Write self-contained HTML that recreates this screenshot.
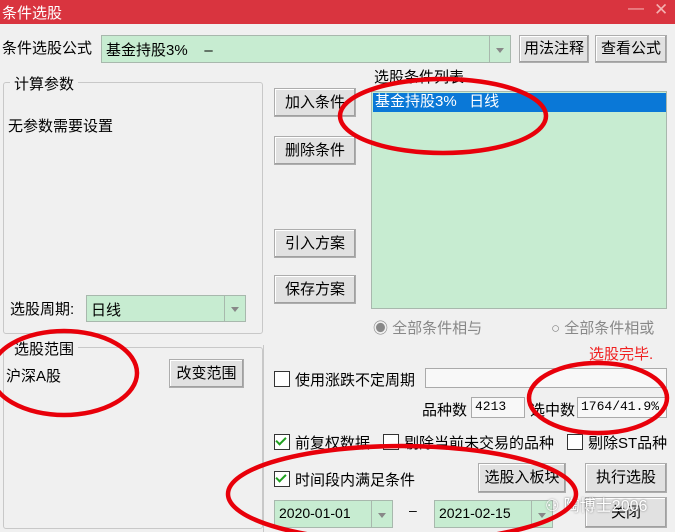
<html style="width:675px;height:532px;overflow:hidden"><head><style>
body{margin:0;width:675px;height:532px;background:#f0f0f0;font-family:"Liberation Sans","Noto Sans CJK SC",sans-serif;font-size:14px;color:#000;position:relative;overflow:hidden}
.a{position:absolute;white-space:nowrap}
.btn{position:absolute;border:1px solid #adadad;background:#e1e1e1;box-shadow:inset -1px -1px 0 #a0a0a0,inset 1px 1px 0 #fff;text-align:center;font-size:15px}
.g{position:absolute;background:#c7ecd1;border:1px solid #a8b8ad}
.dd{position:absolute;right:0;top:0;bottom:0;width:20px;background:#c7ecd1;border-left:1px solid #a8b8ad}
.dd:after{content:"";position:absolute;left:6px;top:45%;border:4px solid transparent;border-top:5px solid #888}
.grp{position:absolute;border:1px solid #c8c8c8;border-radius:3px}
.cb{position:absolute;width:14px;height:14px;border:1px solid #333;background:#fff}
.cb.k:after{content:"";position:absolute;left:3px;top:0px;width:4px;height:8px;border:solid #20a020;border-width:0 2px 2px 0;transform:rotate(45deg)}
.in{position:absolute;background:#f8f8f8;border:1px solid #aaa;font-family:"Liberation Mono",monospace;font-size:13px;line-height:18px;padding-left:3px}
</style></head><body>
<div class="a" style="left:0;top:0;width:675px;height:24px;background:#d9343f"></div>
<div class="a" style="left:2px;top:2px;color:#fff;font-size:15px">条件选股</div>
<div class="a" style="left:628px;top:0px;color:#f4b0b0;font-size:16px">—</div>
<div class="a" style="left:654px;top:0px;color:#f4b0b0;font-size:17px">✕</div>

<div class="a" style="left:2px;top:37px;font-size:15px">条件选股公式</div>
<div class="g" style="left:101px;top:35px;width:408px;height:26px"><span class="a" style="left:4px;top:3px;font-size:15px">基金持股3%&nbsp;&nbsp;&nbsp;&nbsp;–</span><div class="dd"></div></div>
<div class="btn" style="left:519px;top:35px;width:68px;height:26px;line-height:26px">用法注释</div>
<div class="btn" style="left:595px;top:35px;width:70px;height:26px;line-height:26px">查看公式</div>

<div class="grp" style="left:3px;top:82px;width:258px;height:250px"></div>
<div class="a" style="left:10px;top:73px;background:#f0f0f0;padding:0 4px;font-size:15px">计算参数</div>
<div class="a" style="left:8px;top:115px;font-size:15px">无参数需要设置</div>
<div class="a" style="left:10px;top:298px;font-size:15px">选股周期:</div>
<div class="g" style="left:86px;top:295px;width:158px;height:25px"><span class="a" style="left:4px;top:3px;font-size:15px">日线</span><div class="dd"></div></div>

<div class="grp" style="left:3px;top:347px;width:258px;height:180px"></div>
<div class="a" style="left:10px;top:338px;background:#f0f0f0;padding:0 4px;font-size:15px">选股范围</div>
<div class="a" style="left:6px;top:365px;font-size:15px">沪深A股</div>
<div class="btn" style="left:169px;top:359px;width:73px;height:27px;line-height:27px">改变范围</div>

<div class="btn" style="left:274px;top:88px;width:80px;height:27px;line-height:27px">加入条件</div>
<div class="btn" style="left:274px;top:136px;width:80px;height:27px;line-height:27px">删除条件</div>
<div class="btn" style="left:274px;top:229px;width:80px;height:27px;line-height:27px">引入方案</div>
<div class="btn" style="left:274px;top:275px;width:80px;height:27px;line-height:27px">保存方案</div>

<div class="a" style="left:374px;top:66px;font-size:15px">选股条件列表</div>
<div class="g" style="left:371px;top:91px;width:294px;height:216px;background:#c7ecd1"></div>
<div class="a" style="left:373px;top:93px;width:291px;height:19px;background:#0a78d7;color:#fff;font-size:15px;line-height:18px;padding-left:2px">基金持股3%&nbsp;&nbsp;&nbsp;日线</div>

<div class="a" style="left:373px;top:317px;color:#888;font-size:15px">◉ 全部条件相与</div>
<div class="a" style="left:551px;top:317px;color:#888;font-size:15px">○ 全部条件相或</div>
<div class="a" style="left:589px;top:343px;color:#f02020;font-size:15px">选股完毕.</div>
<div class="a" style="left:263px;top:345px;width:1px;height:187px;background:#c8c8c8"></div>

<div class="cb" style="left:274px;top:371px"></div>
<div class="a" style="left:295px;top:369px;font-size:15px">使用涨跌不定周期</div>
<div class="in" style="left:425px;top:368px;width:237px;height:18px"></div>
<div class="a" style="left:422px;top:399px;font-size:15px">品种数</div>
<div class="in" style="left:471px;top:397px;width:49px;height:19px">4213</div>
<div class="a" style="left:530px;top:399px;font-size:15px">选中数</div>
<div class="in" style="left:577px;top:397px;width:85px;height:19px">1764/41.9%</div>

<div class="cb k" style="left:274px;top:434px"></div>
<div class="a" style="left:295px;top:432px;font-size:15px">前复权数据</div>
<div class="cb" style="left:383px;top:434px"></div>
<div class="a" style="left:404px;top:432px;font-size:15px">剔除当前未交易的品种</div>
<div class="cb" style="left:567px;top:434px"></div>
<div class="a" style="left:588px;top:432px;font-size:15px">剔除ST品种</div>

<div class="cb k" style="left:274px;top:471px"></div>
<div class="a" style="left:295px;top:469px;font-size:15px">时间段内满足条件</div>
<div class="btn" style="left:478px;top:463px;width:86px;height:28px;line-height:28px">选股入板块</div>
<div class="btn" style="left:585px;top:463px;width:80px;height:28px;line-height:28px">执行选股</div>
<div class="g" style="left:274px;top:500px;width:117px;height:26px"><span class="a" style="left:4px;top:4px;font-size:14px">2020-01-01</span><div class="dd"></div></div>
<div class="a" style="left:409px;top:502px">–</div>
<div class="g" style="left:434px;top:500px;width:117px;height:26px"><span class="a" style="left:4px;top:4px;font-size:14px">2021-02-15</span><div class="dd"></div></div>
<div class="btn" style="left:585px;top:497px;width:80px;height:29px;line-height:29px">关闭</div>
<div class="a" style="left:545px;top:492px;color:#fff;font-size:16px;text-shadow:0 0 2px #777">⚇ 陶博士2006</div>

<svg class="a" style="left:0;top:0" width="675" height="532"><g fill="none" stroke="#e8000a" stroke-width="4.5">
<ellipse cx="443" cy="116" rx="103" ry="37"/>
<ellipse cx="64" cy="373" rx="73" ry="42"/>
<ellipse cx="598" cy="398" rx="69" ry="35"/>
<ellipse cx="402" cy="494" rx="174" ry="48"/>
</g></svg>
</body></html>
